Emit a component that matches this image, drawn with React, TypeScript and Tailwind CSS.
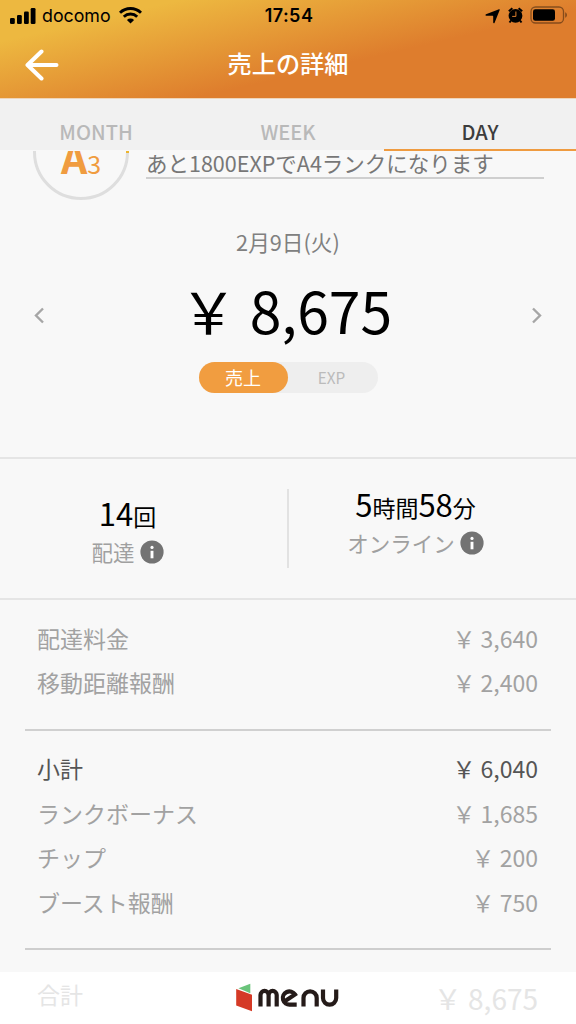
import type { ReactNode } from "react";

interface AmountRow {
  label: string;
  amount: string;
  strong?: boolean;
}

const YEN = "\uffe5";

const baseRows: AmountRow[] = [
  { label: "配達料金", amount: "3,640" },
  { label: "移動距離報酬", amount: "2,400" },
];

const bonusRows: AmountRow[] = [
  { label: "小計", amount: "6,040", strong: true },
  { label: "ランクボーナス", amount: "1,685" },
  { label: "チップ", amount: "200" },
  { label: "ブースト報酬", amount: "750" },
];

function StatusBar() {
  return (
    <div className="grid h-8 grid-cols-3 items-center pl-[10px] pr-[8px] font-['Inter',sans-serif] text-black">
      <div className="flex items-center">
        <svg width="26" height="16" viewBox="0 0 26 16">
          <rect x="0" y="10" width="4.8" height="6" rx="1.3" />
          <rect x="7" y="7" width="4.8" height="9" rx="1.3" />
          <rect x="14" y="3.5" width="4.8" height="12.5" rx="1.3" />
          <rect x="20.7" y="0" width="4.8" height="16" rx="1.3" />
        </svg>
        <span className="ml-[6px] text-[17.8px] leading-8">docomo</span>
        <svg className="-mt-[2px] ml-[8px]" width="23" height="17" viewBox="0 0 23 17" fill="none" stroke="#000" strokeWidth="2.9">
          <path d="M1 5.7a15.2 15.2 0 0 1 21 0" />
          <path d="M4.8 9.7a9.7 9.7 0 0 1 13.4 0" />
          <path d="M11.5 16.5 7.9 13a5.3 5.3 0 0 1 7.2 0Z" fill="#000" stroke="none" />
        </svg>
      </div>
      <span className="-mx-2 text-center text-[18px] font-semibold leading-8 tracking-[0.45px]">17:54</span>
      <div className="flex items-center justify-end">
        <svg width="15" height="15" viewBox="0 0 15 15">
          <path d="M14 .2c.6-.2.9.2.7.8L9.6 13.8c-.3.8-1.4.7-1.4-.2V7.4c0-.4-.2-.6-.6-.6H1.3C.3 6.8.1 5.7 1 5.3Z" />
        </svg>
        <svg className="-mt-[2px] ml-[8px]" width="15" height="17" viewBox="0 0 15 17">
          <circle cx="7.5" cy="8.8" r="6.9" />
          <path d="M.8 4.2 4.4 1.2M14.2 4.2 10.6 1.2M3 13.5l-1.5 2M12 13.5l1.5 2" stroke="#000" strokeWidth="2" fill="none" />
          <path d="M7.9 4.5v4.9H4.2" stroke="#de802e" strokeWidth="1" fill="none" />
        </svg>
        <svg className="-mt-[2px] ml-[7px]" width="38" height="18" viewBox="0 0 38 18">
          <rect x="1" y="1" width="32.5" height="16" rx="4.5" fill="none" stroke="#00000066" strokeWidth="1.3" />
          <rect x="3" y="3.3" width="22" height="11.4" rx="2.3" />
          <path d="M35.2 6.3c2.4 1 2.4 4.4 0 5.4Z" fill="#00000066" />
        </svg>
      </div>
    </div>
  );
}

function Header() {
  return (
    <header className="h-[98px] bg-[linear-gradient(167deg,#edb840_18%,#de7d2d_62%)]">
      <StatusBar />
      <div className="grid h-[62px] grid-cols-[80px_1fr_80px] items-center">
        <svg className="ml-[25px] mt-[3px]" width="35" height="32" viewBox="0 0 35 32" fill="none" stroke="#fff" strokeWidth="4" strokeLinecap="round" strokeLinejoin="round">
          <path d="M16.5 2.5 2.5 16l14 13.5M3 16h28.5" />
        </svg>
        <h1 className="text-center text-[24.2px] font-medium leading-9 text-white">売上の詳細</h1>
      </div>
    </header>
  );
}

function Tabs() {
  return (
    <nav className="grid h-[53px] grid-cols-3 grid-rows-[52px] border-t border-[#efd5b9] bg-[linear-gradient(#f1f1f1_51px,#f8f8f8_51px)] text-center text-[20px] font-medium text-[#b9b9b9]">
      <span className="pt-[18px] leading-[30px]">MONTH</span>
      <span className="pt-[18px] leading-[30px]">WEEK</span>
      <span className="border-b-2 border-[#ef9b40] pt-[18px] leading-[30px] text-[#3d3d3d]">DAY</span>
    </nav>
  );
}

function Rank() {
  return (
    <section className="flex h-[51px] overflow-hidden">
      <div className="relative -mt-[47px] ml-[33px] flex h-24 w-24 shrink-0 items-baseline justify-center rounded-full border-[3px] border-[#dedede] text-[#f09c3f]">
        <span className="text-[41px] font-bold leading-[99px]">A</span>
        <span className="text-[25px] leading-[99px]">3</span>
        <span className="absolute right-[-3px] top-[43px] h-[3px] w-[3px] bg-[#edb52e]" />
      </div>
      <p className="ml-[17px] h-[28px] w-[398px] whitespace-nowrap border-b-2 border-[#cfcfcf] text-[21.5px] leading-[23px] text-[#777]">
        あと1800EXPでA4ランクになります
      </p>
    </section>
  );
}

function Chevron({ d }: { d: string }) {
  return (
    <svg className="mt-[7px]" width="14" height="18" viewBox="0 0 14 18" fill="none" stroke="#a6a6a6" strokeWidth="2.4">
      <path d={d} />
    </svg>
  );
}

function DaySummary() {
  return (
    <section className="flex h-[257px] flex-col items-center border-b-2 border-[#e5e5e5]">
      <p className="mt-[24px] text-[21.7px] leading-8 text-[#808080]">2月9日(火)</p>
      <div className="mt-[18px] flex h-[70px] w-full items-center justify-between px-[33px] text-black">
        <Chevron d="M10 2.5 3 9.5l7 7" />
        <p className="-mt-[4px] pr-1 text-[57px] leading-[70px]">{YEN} 8,675</p>
        <Chevron d="M4 2.5 11 9.5l-7 7" />
      </div>
      <div className="mt-[16px] flex h-[31px] w-[179px] rounded-full bg-[#eee] text-center leading-[31px]">
        <span className="w-[89px] rounded-full bg-[#f19d40] text-[18px] text-white">売上</span>
        <span className="w-[88px] text-[15.3px] text-[#bbb]">EXP</span>
      </div>
    </section>
  );
}

function InfoIcon() {
  return (
    <svg width="24" height="24" viewBox="0 0 24 24">
      <circle cx="12" cy="12" r="11.6" fill="#737373" />
      <path d="M12 10.8v7.5" stroke="#fff" strokeWidth="2.9" />
      <circle cx="12" cy="7.4" r="1.6" fill="#fff" />
    </svg>
  );
}

function Stat({ label, children, className }: { label: string; children: ReactNode; className: string }) {
  return (
    <div className={`flex w-1/2 flex-col items-center ${className}`}>
      <p className="text-[31px] leading-[36px] text-black">{children}</p>
      <p className="flex items-center gap-[5px] text-[21.5px] leading-[36px] text-[#a0a0a0]">
        {label}
        <InfoIcon />
      </p>
    </div>
  );
}

function Stats() {
  return (
    <section className="flex h-[141px] border-b-2 border-[#e5e5e5]">
      <Stat label="配達" className="pr-8 pt-[36px]">
        14<small className="text-[23px]">回</small>
      </Stat>
      <div className="mt-[30px] h-[79px] w-[2px] shrink-0 bg-[#e2e2e2]" />
      <Stat label="オンライン" className="pr-[34px] pt-[27px]">
        5<small className="text-[23px]">時間</small>58<small className="text-[23px]">分</small>
      </Stat>
    </section>
  );
}

function Rows({ rows }: { rows: AmountRow[] }) {
  return (
    <div className="pl-[12px] pr-[13px]">
      {rows.map((row) => (
        <div
          key={row.label}
          className={`flex h-[44.6px] items-center justify-between text-[23px] leading-[44px] ${row.strong ? "text-[#555]" : "text-[#a2a2a2]"}`}
        >
          <span>{row.label}</span>
          <span>
            {YEN} {row.amount}
          </span>
        </div>
      ))}
    </div>
  );
}

function MenuLogo() {
  return (
    <svg width="104" height="30" viewBox="0 0 104 30" aria-label="menu">
      <path d="M2.5 5.2 14.3.7v9.5Z" fill="#6ac47b" />
      <path d="M.2 6 16 11.8v16.5L.2 22.5Z" fill="#d53a26" />
      <g fill="none" stroke="#251b19" strokeWidth="4.2">
        <path d="M24.5 23.5V12a4 4 0 0 1 8.1 0v11.5M32.6 12a4 4 0 0 1 8.1 0v11.5" />
        <path d="M49.5 17.8 59 11.5a6.6 6.6 0 1 0-4.8 10.1h6.5" />
        <path d="M67.5 23.5v-8.6a6.6 6.6 0 0 1 13.2 0v8.6" />
        <path d="M87 6.5v8.6a6.6 6.6 0 0 0 13.2 0V6.5" />
      </g>
    </svg>
  );
}

export default function App() {
  return (
    <main className="h-[1024px] w-[576px] overflow-hidden bg-[#f8f8f8] font-['Noto_Sans_CJK_JP',sans-serif]">
      <Header />
      <Tabs />
      <Rank />
      <DaySummary />
      <Stats />
      <section className="mx-[25px]">
        <div className="h-[131px] border-b-2 border-[#d0d0d0] pt-[15.5px]">
          <Rows rows={baseRows} />
        </div>
        <div className="h-[219px] border-b-2 border-[#cecece] pt-[15px]">
          <Rows rows={bonusRows} />
        </div>
      </section>
      <footer className="mt-[22px] grid h-[52px] grid-cols-[1fr_auto_1fr] items-center bg-white pl-[37px] pr-[38px] text-[#e5e5e5]">
        <span className="pb-[8px] text-[23px] leading-[40px]">合計</span>
        <MenuLogo />
        <span className="whitespace-nowrap text-right text-[28px] leading-[50px]">{YEN} 8,675</span>
      </footer>
    </main>
  );
}
